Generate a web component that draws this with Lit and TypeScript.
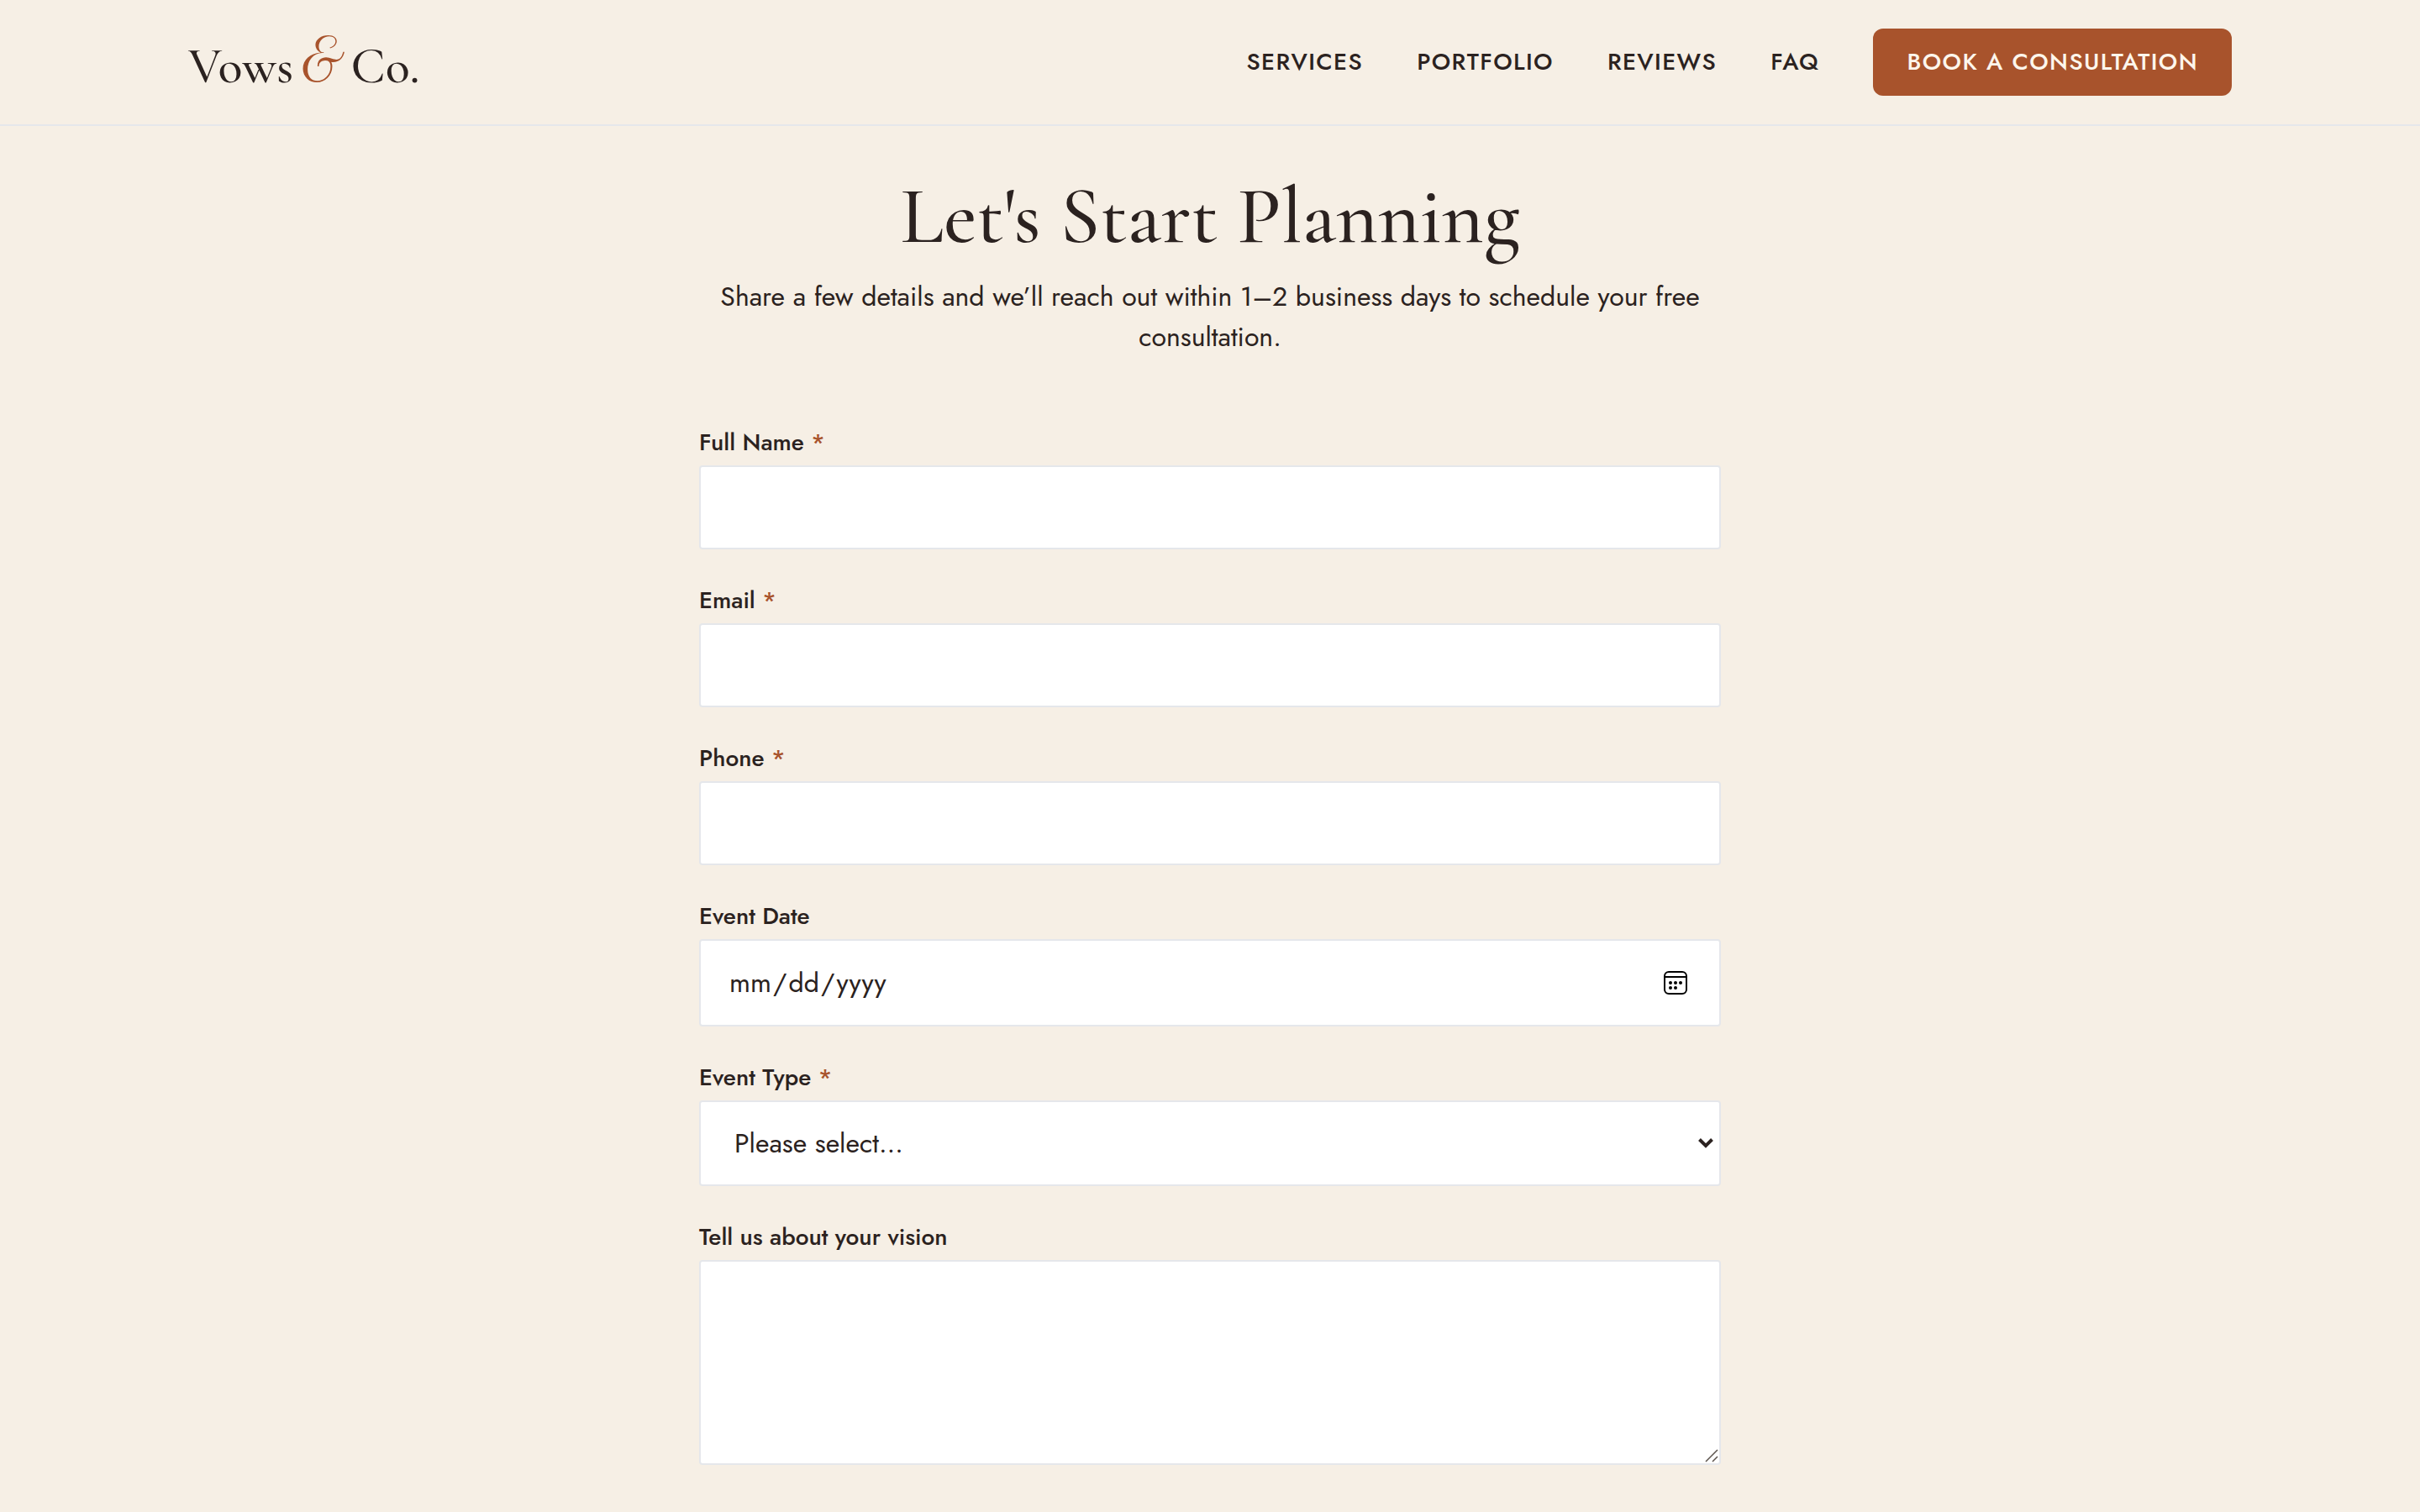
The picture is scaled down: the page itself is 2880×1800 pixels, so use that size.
import { LitElement, html, svg, css, nothing } from "lit";
import { customElement } from "lit/decorators.js";

const NAV_LINKS = [
  { label: "Services", href: "#services" },
  { label: "Portfolio", href: "#portfolio" },
  { label: "Reviews", href: "#reviews" },
  { label: "FAQ", href: "#faq" },
];

const EVENT_TYPES = ["Wedding", "Engagement", "Elopement", "Other"];

const theme = css`
  :host {
    --cream: #f6efe5;
    --ink: #2b2220;
    --rust: #a8532c;
    --line: #e5e7eb;
    --serif: "Cormorant Garamond", "Liberation Serif", serif;
    --script: "Petit Formal Script", "Liberation Serif", cursive;
    --sans: "Jost", "Lato", sans-serif;
    display: block;
    box-sizing: border-box;
    color: var(--ink);
    font-family: var(--sans);
  }
  *,
  *::before,
  *::after {
    box-sizing: border-box;
  }
`;

@customElement("site-header")
export class SiteHeader extends LitElement {
  static styles = [
    theme,
    css`
      .bar {
        border-bottom: 2px solid var(--line);
        background: var(--cream);
      }
      .inner {
        display: flex;
        align-items: center;
        justify-content: space-between;
        max-width: 2560px;
        margin: 0 auto;
        padding: 34px 64px;
      }
      .logo {
        display: flex;
        align-items: baseline;
        gap: 4px;
        padding-top: 10px;
        color: var(--ink);
        font-family: var(--serif);
        font-size: 60px;
        font-weight: 500;
        line-height: 70px;
        text-decoration: none;
        white-space: nowrap;
      }
      .amp {
        color: var(--rust);
        font-family: var(--script);
        font-size: 72px;
        font-weight: 400;
        line-height: 0;
      }
      .nav {
        display: flex;
        align-items: center;
        gap: 64px;
      }
      .link,
      .cta {
        color: var(--ink);
        font-size: 28px;
        font-weight: 500;
        line-height: 40px;
        letter-spacing: 0.05em;
        text-decoration: none;
        text-transform: uppercase;
        white-space: nowrap;
      }
      .cta {
        padding: 20px 40px;
        border-radius: 12px;
        background: var(--rust);
        color: #fdf6ec;
      }
    `,
  ];

  render() {
    return html`
      <header class="bar">
        <div class="inner">
          <a class="logo" href="#home"
            ><span>Vows</span> <span class="amp">&amp;</span> <span>Co.</span></a
          >
          <nav class="nav" aria-label="Main">
            ${NAV_LINKS.map((l) => html`<a class="link" href=${l.href}>${l.label}</a>`)}
            <a class="cta" href="#consultation">Book a Consultation</a>
          </nav>
        </div>
      </header>
    `;
  }
}

@customElement("consultation-form")
export class ConsultationForm extends LitElement {
  static styles = [
    theme,
    css`
      .form {
        display: flex;
        flex-direction: column;
        gap: 40px;
      }
      .field {
        display: flex;
        flex-direction: column;
        gap: 6px;
      }
      .label {
        font-size: 28px;
        font-weight: 500;
        line-height: 42px;
      }
      .required {
        color: var(--rust);
      }
      .control {
        display: block;
        width: 100%;
        height: 100px;
        margin: 0;
        padding: 0 32px;
        border: 2px solid var(--line);
        border-radius: 4px;
        background: #fff;
        color: var(--ink);
        font-family: var(--sans);
        font-size: 32px;
        line-height: 48px;
      }
      .date {
        height: 104px;
      }
      .date::-webkit-datetime-edit-month-field,
      .date::-webkit-datetime-edit-day-field,
      .date::-webkit-datetime-edit-year-field {
        padding: 0 2px;
      }
      .date::-webkit-calendar-picker-indicator {
        opacity: 0;
      }
      .select {
        height: 102px;
        padding: 0 40px;
        appearance: none;
      }
      .area {
        height: 244px;
        padding: 24px 32px;
        resize: none;
      }
      .wrap {
        position: relative;
      }
      .calendar,
      .chevron,
      .grip {
        position: absolute;
        pointer-events: none;
      }
      .calendar {
        top: 38px;
        right: 40px;
        width: 28px;
        height: 28px;
      }
      .chevron {
        top: 43px;
        right: 8px;
        width: 20px;
        height: 16px;
      }
      .grip {
        right: 2px;
        bottom: 2px;
        width: 18px;
        height: 18px;
      }
    `,
  ];

  private label(id: string, text: string, required = false) {
    return html`<label class="label" for=${id}
      >${text}${required ? html` <span class="required">*</span>` : nothing}</label
    >`;
  }

  render() {
    return html`
      <form class="form">
        <div class="field">
          ${this.label("name", "Full Name", true)}
          <input class="control" id="name" type="text" required />
        </div>
        <div class="field">
          ${this.label("email", "Email", true)}
          <input class="control" id="email" type="email" required />
        </div>
        <div class="field">
          ${this.label("phone", "Phone", true)}
          <input class="control" id="phone" type="tel" required />
        </div>
        <div class="field">
          ${this.label("date", "Event Date")}
          <div class="wrap">
            <input class="control date" id="date" type="date" />
            <svg class="calendar" viewBox="0 0 28 28" aria-hidden="true">
              ${svg`<rect x="1" y="1" width="26" height="26" rx="5" fill="none" stroke="#000" stroke-width="2" />
              <path d="M1 7H27" stroke="#000" stroke-width="2" />
              <circle cx="8" cy="14" r="2" /><circle cx="14" cy="14" r="2" /><circle cx="20" cy="14" r="2" />
              <circle cx="8" cy="20" r="2" /><circle cx="14" cy="20" r="2" />`}
            </svg>
          </div>
        </div>
        <div class="field">
          ${this.label("type", "Event Type", true)}
          <div class="wrap">
            <select class="control select" id="type" required>
              <option value="">Please select…</option>
              ${EVENT_TYPES.map((t) => html`<option>${t}</option>`)}
            </select>
            <svg class="chevron" viewBox="0 0 20 16" aria-hidden="true">
              ${svg`<path d="M2.5 3.5 10 11 17.5 3.5" fill="none" stroke="#2b2220" stroke-width="4" />`}
            </svg>
          </div>
        </div>
        <div class="field">
          ${this.label("vision", "Tell us about your vision")}
          <div class="wrap">
            <textarea class="control area" id="vision"></textarea>
            <svg class="grip" viewBox="0 0 18 18" aria-hidden="true">
              ${svg`<path d="M2 16 16 2M10 16 16 10" fill="none" stroke="#5c534d" stroke-width="1.5" />`}
            </svg>
          </div>
        </div>
      </form>
    `;
  }
}

@customElement("app-root")
export class AppRoot extends LitElement {
  static styles = [
    theme,
    css`
      :host {
        min-height: 100vh;
        background: var(--cream);
      }
      .main {
        max-width: 1344px;
        margin: 0 auto;
        padding: 56px 64px;
      }
      .intro {
        display: flex;
        flex-direction: column;
        gap: 19px;
        margin-bottom: 81px;
        text-align: center;
      }
      .title {
        margin: 0;
        font-family: var(--serif);
        font-size: 96px;
        font-weight: 500;
        line-height: 104px;
      }
      .lead {
        margin: 0;
        font-size: 32px;
        line-height: 48px;
      }
    `,
  ];

  render() {
    return html`
      <site-header></site-header>
      <main class="main">
        <div class="intro">
          <h1 class="title">Let's Start Planning</h1>
          <p class="lead">
            Share a few details and we’ll reach out within 1–2 business days to schedule your free
            consultation.
          </p>
        </div>
        <consultation-form></consultation-form>
      </main>
    `;
  }
}
